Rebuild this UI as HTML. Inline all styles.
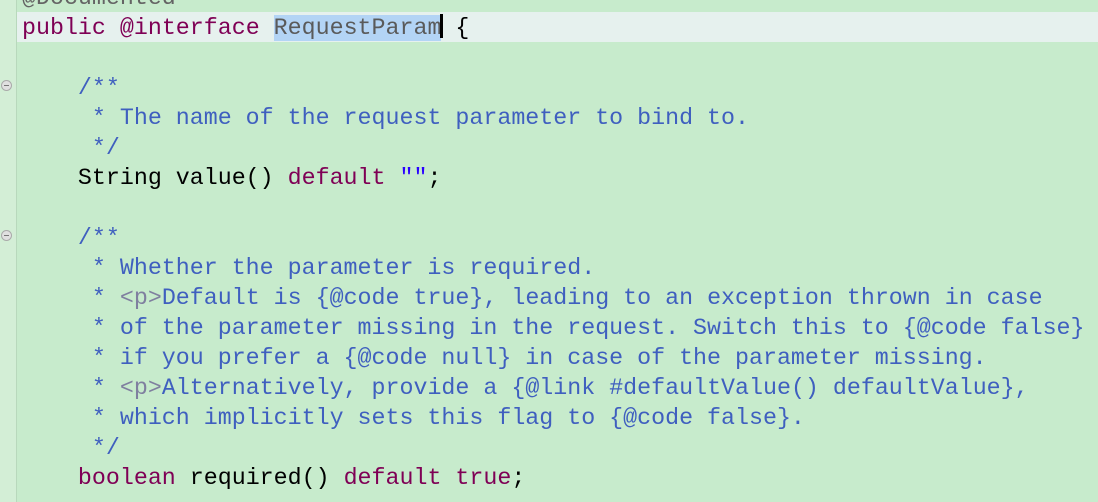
<!DOCTYPE html>
<html><head><meta charset="utf-8"><style>
html,body{margin:0;padding:0;width:1098px;height:502px;overflow:hidden;background:#c7ebcc;}
.gut{position:absolute;left:0;top:0;width:16px;height:502px;background:#d3eed6;border-right:1px solid #b8d8bc;}
.cur{position:absolute;left:17px;top:12px;width:1081px;height:30px;background:#e6f1ee;}
pre{position:absolute;left:22px;top:-17px;margin:0;font-family:"Liberation Mono",monospace;font-size:23.3px;line-height:30px;color:#000;}
.k{color:#7f0055;}
.c{color:#3f5fbf;}
.t{color:#7f7f9f;}
.a{color:#646464;}
.sel{background:#b3d4f5;color:#5a5a5a;}
.caret{display:inline-block;width:3px;height:24px;background:#000;vertical-align:-4px;margin-left:-1px;margin-right:-2px;}
.fold{position:absolute;left:1px;width:11px;height:11px;border-radius:50%;background:#e0e0e0;border:1px solid #aaa;box-sizing:border-box;}
.fold::after{content:"";position:absolute;left:2px;top:4px;width:5px;height:1px;background:#777;}
</style></head><body>
<div class="gut"></div>
<div class="cur"></div>
<div class="fold" style="top:80px"></div>
<div class="fold" style="top:230px"></div>
<pre><span class="a">@Documented</span>
<span class="k">public</span> <span class="k">@interface</span> <span class="sel">RequestParam</span><span class="caret"></span> {

    <span class="c">/**</span>
<span class="c">     * The name of the request parameter to bind to.</span>
<span class="c">     */</span>
    String value() <span class="k">default</span> <span style="color:#2a00ff">""</span>;

    <span class="c">/**</span>
<span class="c">     * Whether the parameter is required.</span>
<span class="c">     * <span class="t">&lt;p&gt;</span>Default is {@code true}, leading to an exception thrown in case</span>
<span class="c">     * of the parameter missing in the request. Switch this to {@code false}</span>
<span class="c">     * if you prefer a {@code null} in case of the parameter missing.</span>
<span class="c">     * <span class="t">&lt;p&gt;</span>Alternatively, provide a {@link #defaultValue() defaultValue},</span>
<span class="c">     * which implicitly sets this flag to {@code false}.</span>
<span class="c">     */</span>
    <span class="k">boolean</span> required() <span class="k">default</span> <span class="k">true</span>;
</pre>
</body></html>
